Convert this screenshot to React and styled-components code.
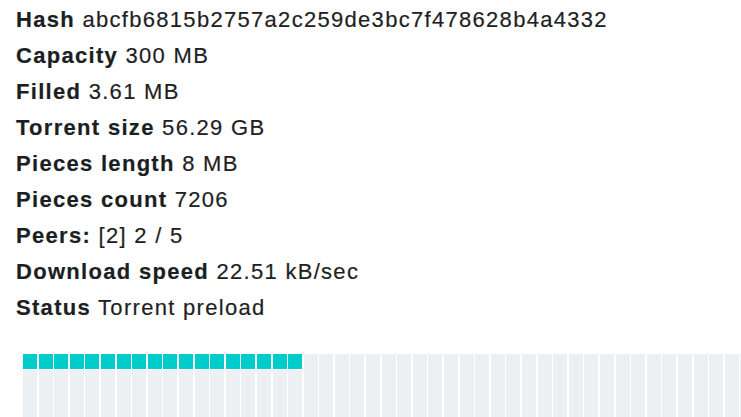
import React from "react";
import styled, { createGlobalStyle } from "styled-components";

const Global = createGlobalStyle`
  html, body { margin: 0; padding: 0; background: #fff; overflow: hidden; }
  body { font-family: "Liberation Sans", Arial, sans-serif; color: #222; }
`;

const Page = styled.div`
  padding: 2px 0 0 16px;
  width: 725px;
  overflow: hidden;
`;

const Info = styled.div`
  display: flex;
  flex-direction: column;
`;

const Row = styled.div`
  font-size: 22px;
  line-height: 36px;
  letter-spacing: 1.3px;
  white-space: nowrap;
  color: #1f1f1f;
  -webkit-text-stroke: 0.2px #1f1f1f;
`;

const Label = styled.b`
  font-weight: 700;
  color: #1b1f24;
  -webkit-text-stroke: 0.2px #1b1f24;
`;

const Cache = styled.div`
  margin: 28px 0 0 7px;
  display: grid;
  grid-template-columns: repeat(50, 14px);
  column-gap: 1.6px;
  row-gap: 1px;
  width: 800px;
`;

const Cell = styled.div`
  height: 15px;
  background: ${(p) => (p.$filled ? "#00cccc" : "#edf0f3")};
  box-shadow: ${(p) => (p.$filled ? "none" : "0 1px 0 #edf0f3")};
`;

const rows = [
  ["Hash", "abcfb6815b2757a2c259de3bc7f478628b4a4332"],
  ["Capacity", "300 MB"],
  ["Filled", "3.61 MB"],
  ["Torrent size", "56.29 GB"],
  ["Pieces length", "8 MB"],
  ["Pieces count", "7206"],
  ["Peers:", "[2] 2 / 5"],
  ["Download speed", "22.51 kB/sec"],
  ["Status", "Torrent preload"],
];

export default function App() {
  const cells = Array.from({ length: 200 }, (_, i) => i < 18);
  return (
    <Page>
      <Global />
      <Info>
        {rows.map(([k, v]) => (
          <Row key={k}>
            <Label>{k}</Label> {v}
          </Row>
        ))}
      </Info>
      <Cache>
        {cells.map((f, i) => (
          <Cell key={i} $filled={f} />
        ))}
      </Cache>
    </Page>
  );
}
